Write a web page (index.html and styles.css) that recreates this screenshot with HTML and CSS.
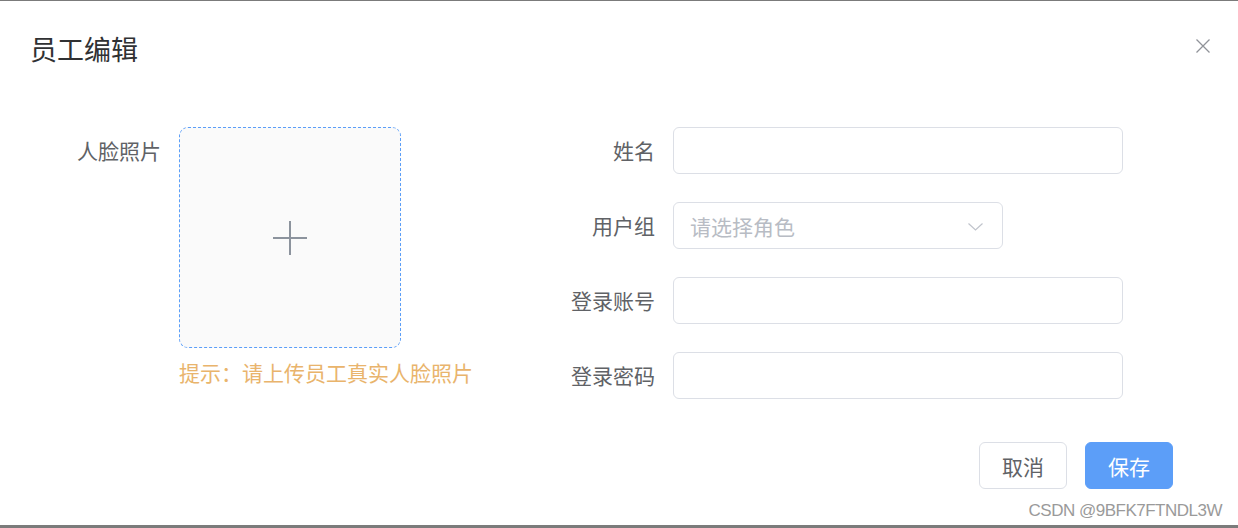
FILE: index.html
```html
<!DOCTYPE html>
<html lang="zh">
<head>
<meta charset="utf-8">
<title>员工编辑</title>
<link rel="stylesheet" href="styles.css">
</head>
<body>
<div class="dialog">
  <div class="header">
    <span class="title">员工编辑</span>
    <button class="close" aria-label="关闭">
      <svg width="14" height="14" viewBox="0 0 14 14"><path d="M0.5 0.5 L13.5 13.5 M13.5 0.5 L0.5 13.5" stroke="#909399" stroke-width="1.3" fill="none"/></svg>
    </button>
  </div>
  <div class="body">
    <div class="left-item">
      <label class="label left-label">人脸照片</label>
      <div class="upload-col">
        <div class="upload">
          <svg width="34" height="34" viewBox="0 0 34 34"><path d="M17 0 V34 M0 17 H34" stroke="#8c939d" stroke-width="2" fill="none"/></svg>
        </div>
        <div class="tip">提示：请上传员工真实人脸照片</div>
      </div>
    </div>
    <div class="right-col">
      <div class="row">
        <label class="label right-label">姓名</label>
        <div class="input"></div>
      </div>
      <div class="row">
        <label class="label right-label">用户组</label>
        <div class="input select">
          <span class="placeholder">请选择角色</span>
          <svg class="arrow" width="15" height="8" viewBox="0 0 15 8"><path d="M0.5 0.5 L7.5 7 L14.5 0.5" stroke="#c0c4cc" stroke-width="1.2" fill="none"/></svg>
        </div>
      </div>
      <div class="row">
        <label class="label right-label">登录账号</label>
        <div class="input"></div>
      </div>
      <div class="row">
        <label class="label right-label">登录密码</label>
        <div class="input"></div>
      </div>
    </div>
  </div>
  <div class="footer">
    <button class="btn cancel">取消</button>
    <button class="btn primary">保存</button>
  </div>
  <div class="watermark">CSDN @9BFK7FTNDL3W</div>
</div>
</body>
</html>
```

FILE: styles.css
```css
* { box-sizing: border-box; }
html, body { margin: 0; padding: 0; background: #fff; }
body {
  font-family: "Noto Sans CJK SC", "Noto Sans", "Liberation Sans", sans-serif;
}
.dialog {
  position: relative;
  width: 1238px;
  height: 528px;
  border-top: 1px solid #7b7b7b;
  border-bottom: 3px solid #7b7b7b;
  background: #fff;
}
.header {
  display: flex;
  justify-content: space-between;
  align-items: flex-start;
  padding: 30px 28px 0 30px;
}
.title {
  font-size: 27px;
  line-height: 36px;
  color: #303133;
}
.close {
  border: 0;
  background: none;
  padding: 0;
  margin-top: 8px;
  width: 14px;
  height: 14px;
  display: flex;
}
.body {
  display: flex;
  padding: 60px 0 0 30px;
}
.label {
  font-size: 21px;
  line-height: 47px;
  color: #606266;
  text-align: right;
  padding-right: 18px;
  flex: none;
}
.left-item { display: flex; flex: none; }
.left-label { width: 149px; }
.upload-col { display: flex; flex-direction: column; width: 222px; }
.upload {
  width: 222px;
  height: 221px;
  border: 1px dashed #5b9ef8;
  border-radius: 9px;
  background: #fafafa;
  display: flex;
  align-items: center;
  justify-content: center;
}
.tip {
  margin-top: 9px;
  font-size: 21px;
  line-height: 31px;
  color: #e9b46c;
  white-space: nowrap;
}
.right-col {
  margin-left: 122px;
  display: flex;
  flex-direction: column;
  gap: 28px;
}
.row { display: flex; }
.right-label { width: 150px; }
.input {
  width: 450px;
  height: 47px;
  border: 1px solid #dcdfe6;
  border-radius: 6px;
  background: #fff;
}
.select {
  width: 330px;
  display: flex;
  align-items: center;
  justify-content: space-between;
  padding: 0 19px 0 16px;
}
.placeholder {
  font-size: 21px;
  color: #b8bcc4;
}
.arrow { margin-top: 2px; }
.footer {
  display: flex;
  justify-content: flex-end;
  gap: 18px;
  padding: 43px 65px 0 0;
}
.btn {
  width: 88px;
  height: 47px;
  border-radius: 6px;
  font-family: "Noto Sans CJK SC", "Noto Sans", sans-serif;
  font-size: 21px;
  padding: 0;
  cursor: pointer;
}
.cancel {
  background: #fff;
  border: 1px solid #dcdfe6;
  color: #606266;
}
.primary {
  background: #5c9ef8;
  border: 1px solid #5c9ef8;
  color: #fff;
}
.watermark {
  position: absolute;
  right: 16px;
  bottom: 4px;
  font-family: "Liberation Sans", Arial, sans-serif;
  font-size: 17px;
  line-height: 20px;
  letter-spacing: -0.5px;
  color: #9a9a9a;
  text-shadow: 0 0 1px #fff;
}
```
